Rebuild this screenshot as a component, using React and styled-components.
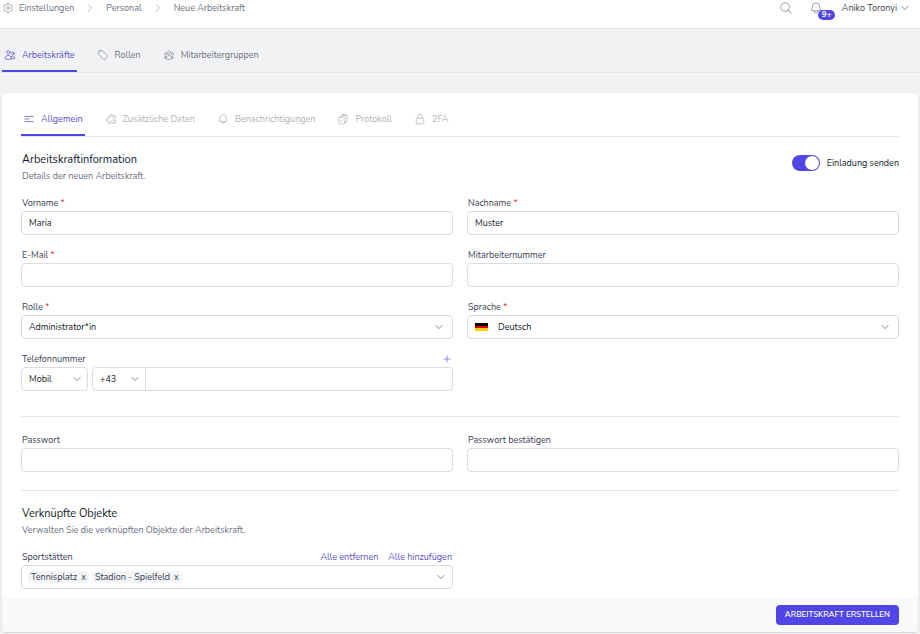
import React, { useState } from 'react';
import styled, { createGlobalStyle, ThemeProvider } from 'styled-components';
import {
    HiOutlineCog6Tooth,
    HiOutlineMagnifyingGlass,
    HiOutlineBell,
    HiOutlineUsers,
    HiOutlineTag,
    HiOutlineUserGroup,
    HiOutlineBars3CenterLeft,
    HiOutlinePuzzlePiece,
    HiOutlineClipboardDocumentCheck,
    HiOutlineLockClosed,
    HiOutlineChevronRight,
    HiOutlineChevronDown,
    HiOutlinePlus,
} from 'react-icons/hi2';

const theme = {
    primary: '#4f46e5',
    primaryText: '#5a50c8',
    heading: '#111827',
    text: '#374151',
    muted: '#6b7280',
    disabled: '#b0b4ba',
    icon: '#8b919c',
    border: '#d9dce0',
    line: '#e5e7eb',
    page: '#f1f2f4',
    footer: '#f8f9fb',
};

const GlobalStyle = createGlobalStyle`
    * {
        box-sizing: border-box;
    }
    body {
        margin: 0;
        background-color: ${theme.page};
    }
    body, button, input, select {
        font-family: Nunito, Lato, "Liberation Sans", sans-serif;
        font-size: 9px;
        line-height: 12px;
        color: ${theme.text};
    }
`;

const TopBar = styled.header`
    display: flex;
    align-items: flex-start;
    justify-content: space-between;
    height: 29px;
    padding: 0 10px 0 2px;
    background-color: #fff;
    border-bottom: 1px solid ${props => props.theme.line};
`;
const Breadcrumbs = styled.nav`
    display: flex;
    align-items: center;
    gap: 11px;
    height: 16px;
    color: ${props => props.theme.icon};
`;
const Crumb = styled.a`
    display: flex;
    align-items: center;
    gap: 5px;
    color: ${props => props.theme.muted};
    text-decoration: none;

    svg {
        color: ${props => props.theme.icon};
    }
`;
const Actions = styled.div`
    display: flex;
    align-items: center;
    gap: 16px;
    height: 16px;
`;
const IconButton = styled.button`
    position: relative;
    display: flex;
    padding: 0;
    border: none;
    background: none;
    color: ${props => props.theme.icon};
    cursor: pointer;
`;
const Badge = styled.span`
    position: absolute;
    top: 9px;
    left: 9px;
    padding: 0 4px;
    border-radius: 5px;
    background-color: ${props => props.theme.primary};
    color: #fff;
    font-size: 8px;
    font-weight: 700;
    line-height: 10px;
`;
const UserButton = styled.button`
    display: flex;
    align-items: center;
    gap: 3px;
    margin-left: 3px;
    padding: 0;
    border: none;
    background: none;
    cursor: pointer;
`;

const Tabs = styled.nav`
    display: flex;
    gap: 18px;
    padding-top: 15px;
    border-bottom: 1px solid ${props => props.theme.line};
`;
const MainTabs = styled(Tabs)`
    padding-left: 2px;
`;
const Tab = styled.a`
    display: flex;
    align-items: center;
    gap: 6px;
    height: 28px;
    padding: 0 2px 5px;
    border-bottom: 2px solid ${props => (props.$active ? props.theme.primary : 'transparent')};
    color: ${props => (props.$active ? props.theme.primaryText : props.theme.muted)};
    text-decoration: none;

    svg {
        color: ${props => (props.$active ? props.theme.primaryText : props.theme.icon)};
    }
`;
const CardTab = styled(Tab)`
    color: ${props => (props.$active ? props.theme.primaryText : props.theme.disabled)};

    svg {
        color: ${props => (props.$active ? props.theme.primaryText : props.theme.disabled)};
    }
`;

const Card = styled.form`
    margin: 20px 2px 1px;
    border-radius: 4px;
    background-color: #fff;
    box-shadow: 0 1px 2px rgba(0, 0, 0, 0.15);
    overflow: hidden;
`;
const CardBody = styled.div`
    padding: 0 19px 9px;
`;
const SectionHeader = styled.div`
    display: flex;
    align-items: flex-start;
    justify-content: space-between;
    padding: 15px 0 15px 1px;
`;
const Title = styled.h2`
    margin: 0 0 2px;
    color: ${props => props.theme.heading};
    font-size: 11px;
    font-weight: 400;
    line-height: 16px;
`;
const Subtitle = styled.p`
    margin: 0;
    color: ${props => props.theme.muted};
`;
const SwitchLabel = styled.label`
    display: flex;
    align-items: center;
    gap: 7px;
    height: 22px;
    color: ${props => props.theme.heading};
    cursor: pointer;
`;
const Switch = styled.input`
    appearance: none;
    width: 28px;
    height: 16px;
    margin: 0;
    padding: 1px;
    border-radius: 8px;
    background-color: ${props => (props.checked ? props.theme.primary : props.theme.border)};
    cursor: pointer;

    &::before {
        content: '';
        display: block;
        width: 14px;
        height: 14px;
        margin-left: ${props => (props.checked ? '12px' : '0')};
        border-radius: 50%;
        background-color: #fff;
    }
`;

const Grid = styled.div`
    display: grid;
    grid-template-columns: 1fr 1fr;
    gap: 14px;
`;
const Field = styled.div`
    display: flex;
    flex-direction: column;
    gap: 2px;
    min-width: 0;
`;
const FieldHeader = styled.div`
    display: flex;
    align-items: center;
    justify-content: space-between;
    height: 12px;
    padding: 0 1px;
`;
const Required = styled.span`
    color: #dc2626;
`;
const Input = styled.input`
    width: 100%;
    height: 24px;
    padding: 0 7px;
    border: 1px solid ${props => props.theme.border};
    border-radius: 4px;
    background-color: #fff;
    color: ${props => props.theme.heading};
    outline: none;

    &:focus {
        border-color: ${props => props.theme.primary};
    }
`;
const SelectBox = styled.div`
    position: relative;
    flex: none;
    width: ${props => props.$width || '100%'};

    > svg {
        position: absolute;
        top: 7px;
        right: ${props => (props.$width ? '6px' : '9px')};
        pointer-events: none;
    }
`;
const NativeSelect = styled.select`
    appearance: none;
    width: 100%;
    height: 24px;
    padding: 0 20px 0 ${props => (props.$flag ? '30px' : '7px')};
    border: 1px solid ${props => props.theme.border};
    border-radius: ${props => (props.$joined ? '4px 0 0 4px' : '4px')};
    background-color: #fff;
    color: ${props => props.theme.heading};
    outline: none;
`;
const Flag = styled.span`
    position: absolute;
    top: 8px;
    left: 8px;
    width: 13px;
    height: 8px;
    background: linear-gradient(#000 33%, #d00 33% 66%, #ffce00 66%);
    pointer-events: none;
`;
const PhoneRow = styled.div`
    display: flex;
    gap: 4px;
`;
const PhoneGroup = styled.div`
    display: flex;
    flex: 1;
`;
const PhoneInput = styled(Input)`
    flex: 1;
    min-width: 0;
    border-left: none;
    border-radius: 0 4px 4px 0;
`;
const Divider = styled.hr`
    height: 1px;
    margin: ${props => props.$top} 0 0;
    border: none;
    background-color: ${props => props.theme.line};
`;
const PasswordGrid = styled(Grid)`
    padding-top: 17px;
`;
const LinkGroup = styled.div`
    display: flex;
    gap: 10px;
`;
const LinkButton = styled.button`
    display: flex;
    padding: 0;
    border: none;
    background: none;
    color: ${props => props.theme.primaryText};
    cursor: pointer;
`;
const TagBox = styled.div`
    display: flex;
    align-items: center;
    gap: 3px;
    height: 24px;
    padding: 0 6px;
    border: 1px solid ${props => props.theme.border};
    border-radius: 4px;
`;
const TagItem = styled.span`
    display: flex;
    gap: 4px;
    padding: 0 3px;
    border-radius: 3px;
    background-color: #f3f4f6;
`;
const TagRemove = styled.button`
    padding: 0;
    border: none;
    background: none;
    cursor: pointer;
`;
const TagInput = styled.input`
    flex: 1;
    min-width: 0;
    padding: 0;
    border: none;
    background: none;
    outline: none;
`;
const Footer = styled.footer`
    display: flex;
    justify-content: flex-end;
    padding: 7px 19px;
    background-color: ${props => props.theme.footer};
`;
const SubmitButton = styled.button`
    height: 20px;
    padding: 0 9px;
    border: none;
    border-radius: 4px;
    background-color: ${props => props.theme.primary};
    color: #fff;
    font-size: 8px;
    font-weight: 600;
    text-transform: uppercase;
    cursor: pointer;
`;

const mainTabs = [
    { text: 'Arbeitskräfte', icon: HiOutlineUsers, active: true },
    { text: 'Rollen', icon: HiOutlineTag },
    { text: 'Mitarbeitergruppen', icon: HiOutlineUserGroup },
];

const cardTabs = [
    { text: 'Allgemein', icon: HiOutlineBars3CenterLeft, active: true },
    { text: 'Zusätzliche Daten', icon: HiOutlinePuzzlePiece },
    { text: 'Benachrichtigungen', icon: HiOutlineBell },
    { text: 'Protokoll', icon: HiOutlineClipboardDocumentCheck },
    { text: '2FA', icon: HiOutlineLockClosed },
];

const places = ['Tennisplatz', 'Stadion - Spielfeld'];

const FieldLabel = ({ id, text, required }) => (
    <label htmlFor={id}>
        {text} {required && <Required>*</Required>}
    </label>
);

const TextField = ({ id, label, required, type = 'text', value }) => (
    <Field>
        <FieldHeader>
            <FieldLabel id={id} text={label} required={required} />
        </FieldHeader>
        <Input id={id} type={type} defaultValue={value} />
    </Field>
);

const Select = ({ id, label, options, width, flag, joined }) => (
    <SelectBox $width={width}>
        <NativeSelect id={id} aria-label={label} $flag={flag} $joined={joined}>
            {options.map(option => <option key={option}>{option}</option>)}
        </NativeSelect>
        {flag && <Flag />}
        <HiOutlineChevronDown size={10} />
    </SelectBox>
);

const App = () => {
    const [invite, setInvite] = useState(true);
    const [tags, setTags] = useState(places);

    return (
        <ThemeProvider theme={theme}>
            <GlobalStyle />
            <TopBar>
                <Breadcrumbs>
                    <Crumb href="#einstellungen"><HiOutlineCog6Tooth size={12} />Einstellungen</Crumb>
                    <HiOutlineChevronRight size={10} />
                    <Crumb href="#personal">Personal</Crumb>
                    <HiOutlineChevronRight size={10} />
                    <Crumb href="#neu">Neue Arbeitskraft</Crumb>
                </Breadcrumbs>
                <Actions>
                    <IconButton aria-label="Suche"><HiOutlineMagnifyingGlass size={14} /></IconButton>
                    <IconButton aria-label="Benachrichtigungen">
                        <HiOutlineBell size={14} />
                        <Badge>9+</Badge>
                    </IconButton>
                    <UserButton>Aniko Toronyi<HiOutlineChevronDown size={10} /></UserButton>
                </Actions>
            </TopBar>
            <MainTabs>
                {mainTabs.map(({ text, icon: Icon, active }) => (
                    <Tab key={text} href="#" $active={active}><Icon size={12} />{text}</Tab>
                ))}
            </MainTabs>
            <Card onSubmit={e => e.preventDefault()}>
                <CardBody>
                    <Tabs>
                        {cardTabs.map(({ text, icon: Icon, active }) => (
                            <CardTab key={text} href="#" $active={active}><Icon size={12} />{text}</CardTab>
                        ))}
                    </Tabs>
                    <SectionHeader>
                        <div>
                            <Title>Arbeitskraftinformation</Title>
                            <Subtitle>Details der neuen Arbeitskraft.</Subtitle>
                        </div>
                        <SwitchLabel>
                            <Switch type="checkbox" checked={invite} onChange={() => setInvite(!invite)} />
                            Einladung senden
                        </SwitchLabel>
                    </SectionHeader>
                    <Grid>
                        <TextField id="vorname" label="Vorname" required value="Maria" />
                        <TextField id="nachname" label="Nachname" required value="Muster" />
                        <TextField id="email" label="E-Mail" required type="email" />
                        <TextField id="nummer" label="Mitarbeiternummer" />
                        <Field>
                            <FieldHeader><FieldLabel id="rolle" text="Rolle" required /></FieldHeader>
                            <Select id="rolle" options={['Administrator*in']} />
                        </Field>
                        <Field>
                            <FieldHeader><FieldLabel id="sprache" text="Sprache" required /></FieldHeader>
                            <Select id="sprache" options={['Deutsch']} flag />
                        </Field>
                        <Field>
                            <FieldHeader>
                                <FieldLabel id="telefon" text="Telefonnummer" />
                                <LinkButton type="button" aria-label="Telefonnummer hinzufügen">
                                    <HiOutlinePlus size={10} />
                                </LinkButton>
                            </FieldHeader>
                            <PhoneRow>
                                <Select label="Art" options={['Mobil']} width="67px" />
                                <PhoneGroup>
                                    <Select label="Vorwahl" options={['+43']} width="54px" joined />
                                    <PhoneInput id="telefon" type="tel" />
                                </PhoneGroup>
                            </PhoneRow>
                        </Field>
                    </Grid>
                    <Divider $top="25px" />
                    <PasswordGrid>
                        <TextField id="passwort" label="Passwort" type="password" />
                        <TextField id="passwort2" label="Passwort bestätigen" type="password" />
                    </PasswordGrid>
                    <Divider $top="18px" />
                    <SectionHeader>
                        <div>
                            <Title>Verknüpfte Objekte</Title>
                            <Subtitle>Verwalten Sie die verknüpften Objekte der Arbeitskraft.</Subtitle>
                        </div>
                    </SectionHeader>
                    <Grid>
                        <Field>
                            <FieldHeader>
                                <FieldLabel id="sport" text="Sportstätten" />
                                <LinkGroup>
                                    <LinkButton type="button" onClick={() => setTags([])}>Alle entfernen</LinkButton>
                                    <LinkButton type="button" onClick={() => setTags(places)}>Alle hinzufügen</LinkButton>
                                </LinkGroup>
                            </FieldHeader>
                            <TagBox>
                                {tags.map(tag => (
                                    <TagItem key={tag}>
                                        {tag}
                                        <TagRemove type="button" onClick={() => setTags(tags.filter(t => t !== tag))}>x</TagRemove>
                                    </TagItem>
                                ))}
                                <TagInput id="sport" />
                                <HiOutlineChevronDown size={10} />
                            </TagBox>
                        </Field>
                    </Grid>
                </CardBody>
                <Footer>
                    <SubmitButton>Arbeitskraft erstellen</SubmitButton>
                </Footer>
            </Card>
        </ThemeProvider>
    );
};

export default App;
